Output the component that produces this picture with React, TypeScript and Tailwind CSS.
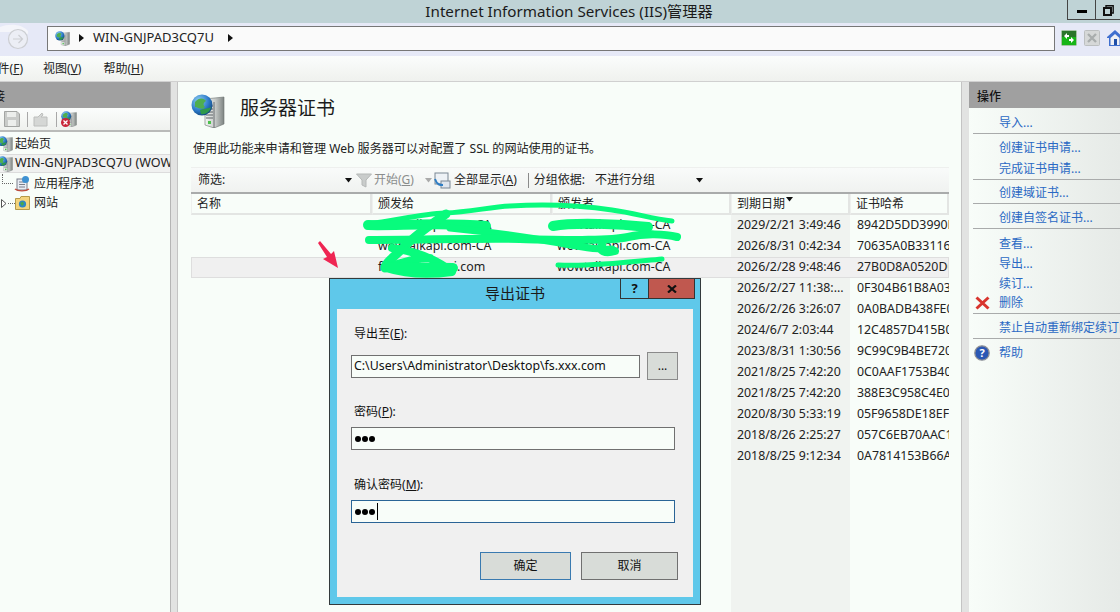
import React from "react";

function ServerGlobe({ size = 16 }: { size?: number }) {
  return (
    <svg width={size} height={size} viewBox="0 0 34 34" className="shrink-0">
      <defs>
        <linearGradient id="srv" x1="0" x2="1" y1="0" y2="0">
          <stop offset="0" stopColor="#f4f6f4" />
          <stop offset="0.55" stopColor="#c4c8c6" />
          <stop offset="1" stopColor="#7d8482" />
        </linearGradient>
        <radialGradient id="glb" cx="0.35" cy="0.3" r="0.8">
          <stop offset="0" stopColor="#8fd0f2" />
          <stop offset="0.6" stopColor="#2a78c8" />
          <stop offset="1" stopColor="#10406e" />
        </radialGradient>
      </defs>
      <path d="M14 5 L33 3 V30 L23 34 L14 31 Z" fill="url(#srv)" stroke="#6b7271" strokeWidth="0.6" />
      <path d="M23 8 V34" stroke="#50565a" strokeWidth="0.8" />
      <path d="M15 12 H22 M15 15 H22 M15 18 H22 M15 21 H22 M15 24 H22" stroke="#5d6366" strokeWidth="1" />
      <rect x="17" y="27" width="3" height="3" fill="#4cc24c" />
      <circle cx="11" cy="11" r="10.5" fill="url(#glb)" />
      <path d="M4 8 C8 3 13 4 15 7 C12 9 12 11 14 13 C11 17 7 13 4 13 Z" fill="#4fae4f" />
      <path d="M9 16 C13 14 18 15 20 13 C19 18 14 21 10 20 Z" fill="#2f9a4a" />
    </svg>
  );
}

function Tri({ className = "" }: { className?: string }) {
  return (
    <svg width="7" height="5" viewBox="0 0 7 5" className={className}>
      <path d="M0 0 H7 L3.5 4.5 Z" fill="currentColor" />
    </svg>
  );
}

function Crumb() {
  return (
    <svg width="5" height="8" viewBox="0 0 5 8" className="shrink-0">
      <path d="M0 0 L5 4 L0 8 Z" fill="#111" />
    </svg>
  );
}

const rows: [string, string, string, string][] = [
  ["wowtalkapi.com-CA", "wowtalkapi.com-CA", "2029/2/21 3:49:46", "8942D5DD3990E"],
  ["wowtalkapi.com-CA", "wowtalkapi.com-CA", "2026/8/31 0:42:34", "70635A0B33116"],
  ["fs.wowtalkapi.com", "wowtalkapi.com-CA", "2026/2/28 9:48:46", "27B0D8A0520D0"],
  ["", "", "2026/2/27 11:38:...", "0F304B61B8A03"],
  ["", "", "2026/2/26 3:26:07", "0A0BADB438FE0"],
  ["", "", "2024/6/7 2:03:44", "12C4857D415B0"],
  ["", "", "2023/8/31 1:30:56", "9C99C9B4BE720"],
  ["", "", "2021/8/25 7:42:20", "0C0AAF1753B40"],
  ["", "", "2021/8/25 7:42:20", "388E3C958C4E0"],
  ["", "", "2020/8/30 5:33:19", "05F9658DE18EF"],
  ["", "", "2018/8/26 2:25:27", "057C6EB70AAC1"],
  ["", "", "2018/8/25 9:12:34", "0A7814153B66A"],
];

const actions: { t: string; top: number; sep?: boolean; icon?: "x" | "help" }[] = [
  { t: "导入...", top: 5 },
  { t: "创建证书申请...", top: 4, sep: true },
  { t: "完成证书申请...", top: 1 },
  { t: "创建域证书...", top: 3, sep: true },
  { t: "创建自签名证书...", top: 4, sep: true },
  { t: "查看...", top: 5, sep: true },
  { t: "导出...", top: 0 },
  { t: "续订...", top: 0 },
  { t: "删除", top: -1, icon: "x" },
  { t: "禁止自动重新绑定续订的证书", top: 4, sep: true },
  { t: "帮助", top: 4, sep: true, icon: "help" },
];

function HeaderCell({ children }: { children?: React.ReactNode }) {
  return (
    <div className="h-[21px] flex items-center pl-[5px] border-l border-r-2 border-b-2 border-l-[#eef0ee] border-r-[#e3e5e3] border-b-[#e3e5e3] overflow-hidden whitespace-nowrap">
      {children}
    </div>
  );
}

function Field({ label, u }: { label: string; u: string }) {
  return (
    <div className="text-[12px] leading-[16px] text-[#111] pl-[3px]">
      {label}(<span className="underline">{u}</span>):
    </div>
  );
}

function Dots() {
  return (
    <>
      <div className="w-[6px] h-[6px] rounded-full bg-black mr-[1px]" />
      <div className="w-[6px] h-[6px] rounded-full bg-black mr-[1px]" />
      <div className="w-[6px] h-[6px] rounded-full bg-black" />
    </>
  );
}

export default function App() {
  return (
    <div className="relative w-[1120px] h-[612px] overflow-hidden flex flex-col bg-[#e2e3e2] text-[12px] text-[#222] font-['Noto_Sans','Noto_Sans_CJK_SC',sans-serif]">
      {/* title bar */}
      <div className="h-[23px] shrink-0 flex bg-[#bfd3d6]">
        <div className="flex-1 pl-[71px] flex items-center justify-center text-[15.2px] text-[#1b1b1b] leading-[23px]">
          Internet Information Services (IIS)管理器
        </div>
        <div className="flex h-[20px] self-start border-b border-[#444]">
          <div className="w-[28px] border-l border-[#444] flex items-center justify-center">
            <div className="w-[10px] h-[3px] bg-black mt-[3px]" />
          </div>
          <div className="w-[25px] border-l border-[#444] flex items-start justify-start pl-[7px] pt-[5px]">
            <svg width="11" height="11" viewBox="0 0 11 11">
              <path d="M3 2.5 V0.8 H10.2 V8 H8" fill="none" stroke="#111" strokeWidth="1.4" />
              <rect x="1" y="3" width="7" height="7" fill="none" stroke="#111" strokeWidth="2" />
            </svg>
          </div>
        </div>
      </div>

      {/* address bar */}
      <div className="h-[33px] shrink-0 flex items-center bg-[#e6e9f7]">
        <div className="w-[47px] h-full shrink-0">
          <svg width="47" height="33" viewBox="0 0 47 33">
            <path d="M0 4 C10 0 22 1 28 8 C29 14 24 10 12 9 L0 9 Z" fill="#f4f5fa" />
            <circle cx="18" cy="16" r="9.5" fill="#eceef5" stroke="#ccced2" strokeWidth="1.2" />
            <path d="M13 16 H22 M18.5 12 L22.5 16 L18.5 20" fill="none" stroke="#ccced2" strokeWidth="1.2" />
          </svg>
        </div>
        <div className="w-[1008px] h-[25px] shrink-0 mb-[3px] border border-[#777] bg-[#fafafa] flex items-center pl-[7px]">
          <ServerGlobe size={15} />
          <div className="ml-[9px]"><Crumb /></div>
          <span className="ml-[9px] text-[13px]">WIN-GNJPAD3CQ7U</span>
          <div className="ml-[14px]"><Crumb /></div>
        </div>
        <div className="ml-[6px] mb-[3px] flex items-center gap-[7px] shrink-0">
          <svg width="16" height="16" viewBox="0 0 16 16">
            <rect x="0.5" y="0.5" width="15" height="15" rx="1" fill="#17b517" stroke="#a7c2a7" />
            <rect x="1" y="1" width="14" height="6" fill="#3b3f3a" opacity="0.55" />
            <path d="M3 6 L6 3 V5 H8 V7 H6 V9 Z M13 10 L10 13 V11 H8 V9 H10 V7 Z" fill="#fff" />
          </svg>
          <svg width="16" height="16" viewBox="0 0 16 16">
            <rect x="0.5" y="0.5" width="15" height="15" rx="1" fill="#d6d8d8" stroke="#bcbfc0" />
            <path d="M4 4 L12 12 M12 4 L4 12" stroke="#a9adad" strokeWidth="2.4" />
          </svg>
          <svg width="16" height="16" viewBox="0 0 16 16">
            <path d="M8 0 L16 7 V8 H14 V16 H2 V8 H0 V7 Z" fill="#3f6fcf" />
            <path d="M3.5 8 L8 4 L12.5 8 V15 H3.5 Z" fill="#eef0f4" />
            <rect x="7" y="9" width="3" height="6" fill="#1f4fa8" />
          </svg>
        </div>
      </div>

      {/* menu bar */}
      <div className="h-[25px] shrink-0 flex items-center bg-gradient-to-b from-[#fbfdfc] to-[#eff1ee] text-[12px] text-[#222]">
        <span className="w-[43px] overflow-hidden whitespace-nowrap" dir="rtl">
          <span dir="ltr" className="pr-[20px]">文件(<span className="underline">F</span>)</span>
        </span>
        <span>视图(<span className="underline">V</span>)</span>
        <span className="ml-[22px]">帮助(<span className="underline">H</span>)</span>
      </div>

      {/* body */}
      <div className="flex-1 min-h-0 flex border-t border-[#d0d0d0]">
        {/* left panel */}
        <div className="w-[171px] shrink-0 flex flex-col bg-[#f8fdf9] overflow-hidden border-r border-[#b5b5b5]">
          <div className="h-[26px] shrink-0 bg-[#a0a0a0] flex items-center pt-[3px] text-[#111] overflow-hidden whitespace-nowrap">
            <span className="-ml-[7px]">接</span>
          </div>
          <div className="h-[24px] shrink-0 flex items-center pl-[4px] border-b-2 border-[#b9bbb9] bg-gradient-to-b from-[#fbfdfc] to-[#eff1ee]">
            <svg width="16" height="16" viewBox="0 0 16 16">
              <path d="M0.5 0.5 H13 L15.5 3 V15.5 H0.5 Z" fill="#c9cbc9" stroke="#a3a5a3" />
              <rect x="3" y="1" width="9" height="5" fill="#eceeec" />
              <rect x="4" y="9" width="8" height="6" fill="#eceeec" />
            </svg>
            <div className="w-px h-[15px] bg-[#a8a8a8] ml-[7px]" />
            <svg width="15" height="15" viewBox="0 0 15 15" className="ml-[5px]">
              <path d="M1 5 H5 L9 1 L10 3 L8 5 H14 V14 H1 Z" fill="#d5d7d5" stroke="#bcbebc" />
            </svg>
            <div className="w-px h-[15px] bg-[#a8a8a8] ml-[8px]" />
            <div className="relative ml-[4px] w-[16px] h-[16px]">
              <ServerGlobe size={16} />
              <svg width="9" height="9" viewBox="0 0 9 9" className="absolute left-0 bottom-0">
                <circle cx="4.5" cy="4.5" r="4.5" fill="#c9263a" />
                <path d="M2.5 2.5 L6.5 6.5 M6.5 2.5 L2.5 6.5" stroke="#fff" strokeWidth="1.3" />
              </svg>
            </div>
          </div>
          <div className="h-[20px] shrink-0 flex items-center gap-[2px] -ml-[3px] mt-[2px]">
            <ServerGlobe size={16} />
            <span>起始页</span>
          </div>
          <div className="h-[19px] shrink-0 flex items-center gap-[2px] -ml-[3px] bg-[#f0f1f0] border-y border-[#dcdcdc] whitespace-nowrap">
            <ServerGlobe size={16} />
            <span className="text-[12.6px]">WIN-GNJPAD3CQ7U (WOWTALK\Administrator)</span>
          </div>
          <div className="h-[20px] shrink-0 flex items-center pl-[2px] mt-[1px]">
            <div className="w-[11px] h-[10px] border-l border-b border-dotted border-[#666] -mt-[10px]" />
            <svg width="16" height="16" viewBox="0 0 16 16" className="ml-[1px]">
              <rect x="3" y="3" width="10" height="11" fill="#e9edf4" stroke="#7a7f8a" />
              <path d="M5 6 H11 M5 8.5 H11 M5 11 H11" stroke="#7a7f8a" />
              <circle cx="11.5" cy="3.5" r="3.5" fill="#3e92d2" />
              <path d="M1 13 C4 15.5 12 15.5 15 13" stroke="#c04b3c" strokeWidth="1.4" fill="none" />
            </svg>
            <span className="ml-[4px]">应用程序池</span>
          </div>
          <div className="h-[20px] shrink-0 flex items-center pl-[1px] -mt-[1px]">
            <svg width="6" height="9" viewBox="0 0 6 9" className="shrink-0">
              <path d="M0.5 0.5 L5 4.5 L0.5 8.5 Z" fill="#fff" stroke="#555" />
            </svg>
            <div className="w-[7px] border-b border-dotted border-[#666] ml-[1px]" />
            <svg width="15" height="14" viewBox="0 0 15 14">
              <path d="M0.5 2.5 H5 L6 0.5 H14.5 V13.5 H0.5 Z" fill="#f3d47d" stroke="#b59a4a" />
              <circle cx="7.5" cy="8" r="3.6" fill="#2f86c6" />
              <path d="M5 7 L8 5.5 L9 8 L7 10 Z" fill="#49a94a" />
            </svg>
            <span className="ml-[4px]">网站</span>
          </div>
        </div>

        <div className="w-[6px] shrink-0" />

        {/* centre panel */}
        <div className="w-[785px] shrink-0 flex flex-col bg-[#f8fdf9] border-x border-[#c4c4c4] pl-[13px] pr-[12px] overflow-hidden">
          <div className="h-[46px] shrink-0 flex items-center">
            <div className="mt-[11px]"><ServerGlobe size={34} /></div>
            <span className="ml-[15px] text-[19px] leading-[28px] text-[#1c1c1c] mt-[6px]">服务器证书</span>
          </div>
          <div className="h-[20px] mt-[11px] shrink-0 flex items-center pl-[2px] text-[12.1px] text-[#222]">
            使用此功能来申请和管理 Web 服务器可以对配置了 SSL 的网站使用的证书。
          </div>
          {/* toolbar */}
          <div className="h-[27px] mt-[8px] shrink-0 flex items-center border-t border-[#eef0ee] border-b-2 border-b-[#a9abab] bg-gradient-to-b from-[#f9fbfa] to-[#f0f2f0] pl-[7px] text-[#222]">
            <span className="w-[30px]">筛选:</span>
            <div className="ml-[117px] text-[#111]"><Tri /></div>
            <svg width="16" height="15" viewBox="0 0 16 15" className="ml-[4px]">
              <path d="M0.5 1 H15.5 L10 7 V14 L6 12 V7 Z" fill="#c9cccb" stroke="#b5b8b7" />
            </svg>
            <span className="ml-[2px] text-[#8a8d8c]">开始(<span className="underline">G</span>)</span>
            <div className="ml-[11px] text-[#aaa]"><Tri /></div>
            <svg width="17" height="17" viewBox="0 0 17 17" className="ml-[2px]">
              <rect x="1" y="1" width="13" height="11" fill="#eef2f6" stroke="#7b8794" />
              <rect x="7" y="9" width="9" height="7" fill="#dfe6ee" stroke="#7b8794" />
              <path d="M1 7 C3 13 6 13 9 13" stroke="#2f7ec4" strokeWidth="2" fill="none" />
            </svg>
            <span className="ml-[3px]">全部显示(<span className="underline">A</span>)</span>
            <div className="w-px h-[15px] bg-[#8a8a8a] ml-[11px]" />
            <span className="ml-[5px]">分组依据:</span>
            <span className="ml-[10px] w-[101px]">不进行分组</span>
            <div className="text-[#111]"><Tri /></div>
          </div>
          {/* list */}
          <div className="flex-1 min-h-0 flex flex-col overflow-hidden">
            <div className="grid grid-cols-[181px_180px_179px_119px_99px] shrink-0">
              <HeaderCell>名称</HeaderCell>
              <HeaderCell>颁发给</HeaderCell>
              <HeaderCell>颁发者</HeaderCell>
              <div className="relative">
                <HeaderCell>到期日期</HeaderCell>
                <div className="absolute left-[55px] top-[3px] text-[#111]"><Tri /></div>
              </div>
              <HeaderCell>证书哈希</HeaderCell>
            </div>
            {rows.map((r, i) => (
              <div
                key={i}
                className={
                  "grid grid-cols-[181px_180px_179px_119px_99px] h-[21px] shrink-0 items-stretch whitespace-nowrap text-[12.35px] " +
                  (i === 2 ? "bg-[#f0f0f0] outline outline-1 -outline-offset-1 outline-[#dedede]" : "")
                }
              >
                <div />
                <div className="pl-[6px] flex items-center">{r[0]}</div>
                <div className="pl-[5px] flex items-center">{r[1]}</div>
                <div className={"pl-[6px] flex items-center " + (i === 2 ? "" : "bg-[#f0f3f0]")}>{r[2]}</div>
                <div className="pl-[7px] flex items-center overflow-hidden">{r[3]}</div>
              </div>
            ))}
            <div className="grid grid-cols-[181px_180px_179px_119px_99px] flex-1">
              <div />
              <div />
              <div />
              <div className="bg-[#f0f3f0]" />
              <div />
            </div>
          </div>
        </div>

        <div className="w-[7px] shrink-0" />

        {/* right panel */}
        <div className="flex-1 min-w-0 flex flex-col bg-gradient-to-r from-[#f8fdf9] to-[#e6eae7] overflow-hidden">
          <div className="h-[26px] shrink-0 bg-[#a0a0a0] flex items-center pl-[8px] pt-[3px] font-medium text-[#111]">操作</div>
          {actions.map((a, i) => (
            <div key={i} className="shrink-0">
              {a.sep && <div className="h-px ml-[4px] bg-[#a9abab]" />}
              <div
                className="h-[20px] flex items-center relative pl-[30px] text-[#2a69c4] whitespace-nowrap"
                style={{ marginTop: a.top }}
              >
                {a.icon === "x" && (
                  <svg width="15" height="14" viewBox="0 0 15 14" className="absolute left-[6px] top-[3px]">
                    <path d="M1.5 1.5 L13.5 12.5 M13.5 1.5 L1.5 12.5" stroke="#d8352e" strokeWidth="3" />
                  </svg>
                )}
                {a.icon === "help" && (
                  <svg width="16" height="16" viewBox="0 0 16 16" className="absolute left-[5px] top-[2px]">
                    <circle cx="8" cy="8" r="7.2" fill="#2b58b4" stroke="#8d8f94" strokeWidth="1.3" />
                    <text x="8" y="12" textAnchor="middle" fontSize="11" fontWeight="700" fill="#fff">?</text>
                  </svg>
                )}
                {a.t}
              </div>
            </div>
          ))}
        </div>
      </div>

      {/* green scribbles and arrow over the list */}
      <svg width="1120" height="612" viewBox="0 0 1120 612" className="absolute left-0 top-0 pointer-events-none">
        <g fill="none" stroke="#08fb7d" strokeLinecap="round" strokeLinejoin="round">
          <path d="M368 224 C395 221 420 214 445 213 C470 212 490 207 510 206 C545 204 585 206 612 210 C635 213 652 219 672 221" strokeWidth="5" />
          <path d="M368 225 C395 226 440 222 486 226" strokeWidth="10" />
          <path d="M450 228 C480 231 520 236 560 243 C585 248 600 250 612 249" strokeWidth="7" />
          <path d="M369 240 C420 240 480 238 520 239 C570 240 610 241 628 237 C645 233 665 234 677 237" strokeWidth="8" />
          <path d="M553 226 C575 222 620 224 648 227" strokeWidth="10" />
          <path d="M446 214 C430 225 415 235 403 248 C393 258 385 263 385 268" strokeWidth="9" />
          <path d="M392 248 C420 252 440 262 452 272 C430 275 405 274 386 268 C402 262 418 258 430 258" strokeWidth="8" />
          <path d="M386 267 L453 268" strokeWidth="10" />
          <path d="M558 265 C590 267 630 262 662 259" strokeWidth="5" />
          <path d="M602 245 C598 251 605 254 615 251" strokeWidth="8" />
        </g>
        <path d="M320 241 L331 254 L334 251 L338 268 L323 259 L327 257 L318 243 Z" fill="#ef2653" />
      </svg>

      {/* dialog */}
      <div className="absolute left-[329px] top-[278px] w-[372px] h-[327px] border border-[#333a3c] bg-[#5fc8ea] flex flex-col">
        <div className="h-[30px] shrink-0 relative flex items-center justify-center text-[15px] text-[#1a1a1a]">
          <span className="-mt-[2px]">导出证书</span>
          <div className="absolute left-[290px] top-0 flex h-[20px] border-b border-l border-[#333]">
            <div className="w-[28px] flex items-center justify-center font-bold text-[13px] text-[#111] border-r border-[#333]">?</div>
            <div className="w-[46px] bg-[#c0584f] flex items-center justify-center border-r border-[#333]">
              <svg width="10" height="8" viewBox="0 0 10 8">
                <path d="M1 0.5 L9 7.5 M9 0.5 L1 7.5" stroke="#111" strokeWidth="2.2" />
              </svg>
            </div>
          </div>
        </div>
        <div className="mx-[7px] h-[288px] bg-[#f0f0f0] shrink-0 pl-[14px] pr-[15px] flex flex-col">
          <div className="mt-[17px]"><Field label="导出至" u="E" /></div>
          <div className="mt-[10px] flex items-center h-[28px]">
            <div className="w-[289px] h-[23px] border border-[#707070] bg-[#f8fdf9] flex items-center pl-[2px] text-[12.35px] text-[#111]">
              C:\Users\Administrator\Desktop\fs.xxx.com
            </div>
            <div className="ml-[7px] w-[31px] h-[28px] border border-[#8a8a8a] bg-[#d8dcd8] flex items-center justify-center text-[#111]">...</div>
          </div>
          <div className="mt-[24px]"><Field label="密码" u="P" /></div>
          <div className="mt-[7px] w-[324px] h-[23px] border border-[#707070] bg-[#f8fdf9] flex items-center pl-[3px]">
            <Dots />
          </div>
          <div className="mt-[27px]"><Field label="确认密码" u="M" /></div>
          <div className="mt-[7px] w-[324px] h-[23px] border border-[#2a6496] bg-[#f8fdf9] flex items-center pl-[3px]">
            <Dots />
            <div className="w-px h-[17px] bg-black ml-[2px]" />
          </div>
          <div className="mt-[29px] flex justify-end gap-[10px] text-[#111]">
            <div className="w-[91px] h-[28px] border border-[#3a7ab0] bg-[#d8dcd8] flex items-center justify-center">确定</div>
            <div className="w-[97px] h-[28px] border border-[#707070] bg-[#d8dcd8] flex items-center justify-center">取消</div>
          </div>
        </div>
      </div>
    </div>
  );
}
